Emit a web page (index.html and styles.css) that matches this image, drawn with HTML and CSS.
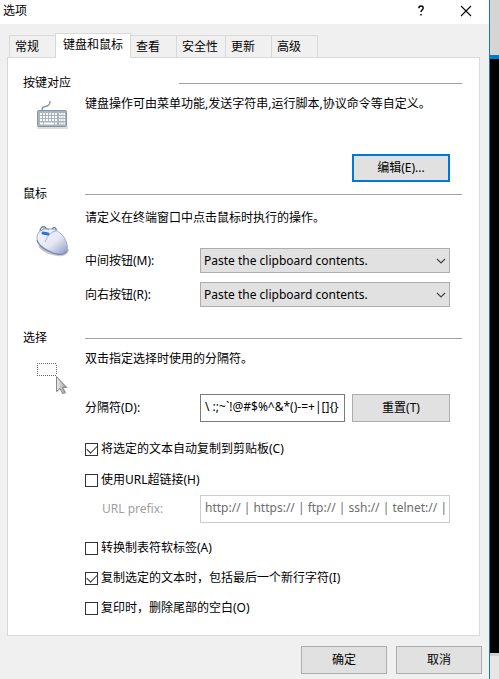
FILE: index.html
```html
<!DOCTYPE html>
<html lang="zh-CN">
<head>
<meta charset="utf-8">
<title>选项</title>
<link rel="stylesheet" href="styles.css">
</head>
<body>
<main class="dialog">
  <header class="titlebar">
    <h1 class="title">选项</h1>
    <button class="caption" type="button" aria-label="帮助"><svg width="12" height="12" viewBox="0 0 12 12"><path d="M3.8 3.2C3.9 1.7 4.8 1 6 1s2.2.7 2.2 2c0 1.900-2.200 2-2.200 4M6 9v1.600" fill="none" stroke="#000" stroke-width="1.400"/></svg></button>
    <button class="caption" type="button" aria-label="关闭"><svg width="12" height="12" viewBox="0 0 12 12"><path d="M1 1l10 10M11 1L1 11" stroke="#000" stroke-width="1.100"/></svg></button>
  </header>
  <nav class="tabs" role="tablist">
    <button class="tab" type="button" role="tab">常规</button>
    <button class="tab active" type="button" role="tab" aria-selected="true">键盘和鼠标</button>
    <button class="tab" type="button" role="tab">查看</button>
    <button class="tab tab-wide" type="button" role="tab">安全性</button>
    <button class="tab" type="button" role="tab">更新</button>
    <button class="tab" type="button" role="tab">高级</button>
  </nav>
  <div class="panel" role="tabpanel">
    <section class="group keys">
      <h2 class="heading heading-long"><span>按键对应</span></h2>
      <div class="body">
        <svg class="icon" width="34" height="34" viewBox="0 0 34 34">
          <path d="M6 10c0-4 3-3 5-4 2-1 3-1 3-5" fill="none" stroke="#8c9ba7" stroke-width="1.500"/>
          <rect x="1" y="26" width="31" height="3" rx="1" fill="#dddddd"/>
          <rect x="1.500" y="10.500" width="29" height="16" rx="1" fill="#aab4bc" stroke="#8795a0"/>
          <path d="M4 14h17M4 17h17M4 20h17" stroke="#fff" stroke-width="2" stroke-dasharray="2 1"/>
          <path d="M4 23.500h3M8 23.500h10M19 23.500h2" stroke="#fff" stroke-width="2"/>
          <path d="M23 14h6M23 17h6M23 20h6M23 23.500h6" stroke="#fff" stroke-width="2" stroke-dasharray="1.500 .7"/>
        </svg>
        <div class="fields">
          <p class="text">键盘操作可由菜单功能,发送字符串,运行脚本,协议命令等自定义。</p>
          <button class="button focus edit" type="button">编辑(E)...</button>
        </div>
      </div>
    </section>
    <section class="group mouse">
      <h2 class="heading"><span>鼠标</span></h2>
      <div class="body">
        <svg class="icon" width="34" height="34" viewBox="0 0 34 34">
          <defs><linearGradient id="shell" x1="0" y1="0" x2="1" y2="1"><stop offset="0" stop-color="#f4f6fc"/><stop offset=".55" stop-color="#e4e8f4"/><stop offset="1" stop-color="#8d99c2"/></linearGradient></defs>
          <path d="M3 22c5 6 15 10 23 9 4-1 6-3 6-6" fill="none" stroke="#c8c8cc" stroke-width="2"/>
          <path d="M4 8c0-4 2-6 5-5 2 3 5 3 7 2 2-2 5-2 4 3" fill="none" stroke="#687696" stroke-width="1.300"/>
          <path d="M1 14C1 9 4 6 9 5c7-1 13 1 18 7 4 5 5 11 4 15-3 5-12 3-19-1C5 23 1 19 1 14z" fill="url(#shell)" stroke="#a3acc9"/>
          <path d="M9 18c2-5 5-10 11-11" fill="none" stroke="#a9b2cc"/>
          <path d="M1 16c1 4 5 8 11 11 7 4 16 5 19 0" fill="none" stroke="#7785b4" stroke-width="1.300"/>
          <path d="M7 9l5 1" stroke="#2675dd" stroke-width="3" stroke-linecap="round"/>
          <path d="M5 7c2-3 5-3 8-1" fill="none" stroke="#8290aa"/>
        </svg>
        <div class="fields">
          <p class="text">请定义在终端窗口中点击鼠标时执行的操作。</p>
          <div class="row first-select">
            <label for="middle">中间按钮(M):</label>
            <span class="drop"><select id="middle"><option>Paste the clipboard contents.</option></select><svg width="10" height="6" viewBox="0 0 10 6"><path d="M1 1l4 4 4-4" fill="none" stroke="#444" stroke-width="1.200"/></svg></span>
          </div>
          <div class="row second-select">
            <label for="right">向右按钮(R):</label>
            <span class="drop"><select id="right"><option>Paste the clipboard contents.</option></select><svg width="10" height="6" viewBox="0 0 10 6"><path d="M1 1l4 4 4-4" fill="none" stroke="#444" stroke-width="1.200"/></svg></span>
          </div>
        </div>
      </div>
    </section>
    <section class="group selection">
      <h2 class="heading"><span>选择</span></h2>
      <div class="body">
        <svg class="icon" width="34" height="34" viewBox="0 0 34 34">
          <defs><linearGradient id="arrow" x1="0" x2="1"><stop offset="0" stop-color="#eeeeee"/><stop offset="1" stop-color="#999999"/></linearGradient></defs>
          <path d="M1 1.500h20M1 13.500h20M1.500 3v10M20.500 3v10" fill="none" stroke="#666" stroke-dasharray="1 1"/>
          <path d="M21 15v16l4-4 3 6 3-2-3-5h5z" fill="#ddd"/>
          <path d="M20.500 14.500v15l3.500-3 2.500 5 2.500-1-2.500-5h4z" fill="url(#arrow)" stroke="#888"/>
        </svg>
        <div class="fields">
          <p class="text">双击指定选择时使用的分隔符。</p>
          <div class="row separator">
            <label for="sep">分隔符(D):</label>
            <input class="box" id="sep" type="text" value="\ :;~`!@#$%^&amp;*()-=+|[]{}">
            <button class="button" type="button">重置(T)</button>
          </div>
          <label class="check copy"><input type="checkbox" checked><span>将选定的文本自动复制到剪贴板(C)</span></label>
          <label class="check link"><input type="checkbox"><span>使用URL超链接(H)</span></label>
          <div class="row prefix">
            <label for="prefix">URL prefix:</label>
            <input class="box" id="prefix" type="text" disabled value="http:// | https:// | ftp:// | ssh:// | telnet:// |">
          </div>
          <div class="checks">
            <label class="check"><input type="checkbox"><span>转换制表符软标签(A)</span></label>
            <label class="check"><input type="checkbox" checked><span>复制选定的文本时，包括最后一个新行字符(I)</span></label>
            <label class="check"><input type="checkbox"><span>复印时，删除尾部的空白(O)</span></label>
          </div>
        </div>
      </div>
    </section>
  </div>
  <footer class="actions">
    <button class="button" type="button">确定</button>
    <button class="button" type="button">取消</button>
  </footer>
</main>
<aside class="backdrop"><div class="bar"></div><div class="screen"></div><div class="status"></div></aside>
</body>
</html>
```
FILE: styles.css
```css
* { box-sizing: border-box; }

body {
  margin: 0;
  min-height: 100vh;
  display: flex;
  background: #f0f0f0;
  color: #000;
  font: 12px/16px "Noto Sans", "Noto Sans CJK SC", sans-serif;
}

h1, h2, p { margin: 0; font: inherit; }
button, input, select { font: inherit; color: inherit; border-radius: 0; }

.dialog {
  flex: 1;
  min-width: 0;
  display: flex;
  flex-direction: column;
  border-right: 1px solid #1878c4;
}

.titlebar {
  height: 24px;
  display: flex;
  align-items: center;
  padding: 0 1px 2px 3px;
  background: #fff;
}
.title { flex: 1; }
.caption {
  width: 45px;
  height: 22px;
  padding: 0;
  border: 0;
  background: none;
  display: flex;
  align-items: center;
  justify-content: center;
}

.tabs {
  display: flex;
  align-items: flex-end;
  padding: 9px 0 0 9px;
}
.tab {
  width: 47px;
  height: 22px;
  padding: 0 0 0 5px;
  text-align: left;
  border: 1px solid #d9d9d9;
  border-bottom: 0;
  margin-right: -1px;
  background: #f0f0f0;
}
.tab-wide { width: 50px; }
.tab.active {
  width: 76px;
  height: 25px;
  padding: 0 0 2px 7px;
  margin-bottom: -1px;
  background: #fff;
  z-index: 1;
}

.panel {
  margin: 0 9px 0 7px;
  padding: 17px 17px 19px 15px;
  border: 1px solid #d9d9d9;
  background: #fff;
}

.heading { display: flex; align-items: center; }
.heading span { width: 62px; }
.heading-long span { width: 156px; }
.heading::after { content: ""; flex: 1; height: 1px; background: #a0a0a0; }

.body {
  display: grid;
  grid-template-columns: 62px 1fr;
  align-items: start;
  padding-right: 12px;
}
.fields { min-width: 0; display: flex; flex-direction: column; }
.text { white-space: nowrap; }
.icon { margin-left: 13px; }
.keys .icon { margin-top: 9px; }
.mouse .icon { margin-top: 22px; }
.selection .icon { margin-top: 16px; }
.keys .fields { padding-top: 5px; }
.mouse { margin-top: 4px; }
.mouse .fields { padding-top: 8px; }
.selection { margin-top: 23px; }
.selection .fields { padding-top: 5px; }

.button {
  width: 98px;
  height: 28px;
  padding: 0;
  border: 1px solid #adadad;
  background: #e1e1e1;
}
.focus { border: 2px solid #0078d7; }
.edit { align-self: flex-end; margin-top: 42px; }

.row { display: flex; align-items: center; }
.row label { width: 115px; flex: none; }
.first-select { margin-top: 22px; }
.second-select { margin-top: 9px; }

.drop { position: relative; flex: 1; display: flex; }
.drop svg { position: absolute; right: 4px; top: 10px; pointer-events: none; }
select {
  appearance: none;
  width: 100%;
  height: 25px;
  padding: 0 3px;
  border: 1px solid #adadad;
  background: #e1e1e1;
}

.box {
  flex: 1;
  min-width: 0;
  height: 28px;
  padding: 0 2px 4px 4px;
  border: 1px solid #7a7a7a;
  background: #fff;
}
.box:disabled { border-color: #ccc; color: #6d6d6d; }
.separator { margin-top: 27px; }
.separator .button { margin-left: 7px; }
.prefix { margin-top: 7px; }
.prefix label { padding-left: 17px; color: #a0a0a0; }

.check { display: flex; align-items: center; gap: 3px; align-self: flex-start; }
.check input {
  appearance: none;
  width: 13px;
  height: 13px;
  margin: 0;
  display: grid;
  place-items: center;
  border: 1px solid #333;
  background: #fff;
}
.check input:checked::after {
  content: "";
  width: 9px;
  height: 5px;
  border: solid #333;
  border-width: 0 0 1px 1px;
  transform: translateY(-1px) rotate(-45deg);
}
.copy { margin-top: 19px; }
.link { margin-top: 15px; }
.checks { display: flex; flex-direction: column; gap: 14px; margin-top: 17px; }

.actions {
  display: flex;
  justify-content: flex-end;
  gap: 9px;
  padding: 10px 7px 5px;
}
.actions .button { width: 86px; }

.backdrop { width: 9px; display: flex; flex-direction: column; }
.bar { height: 59px; background: #d5d5d5; border-bottom: 4px solid #007acc; }
.screen { flex: 1; background: #000; }
.status { height: 26px; background: #e6e6e6; border-top: 3px solid #d0d0d0; }
```
